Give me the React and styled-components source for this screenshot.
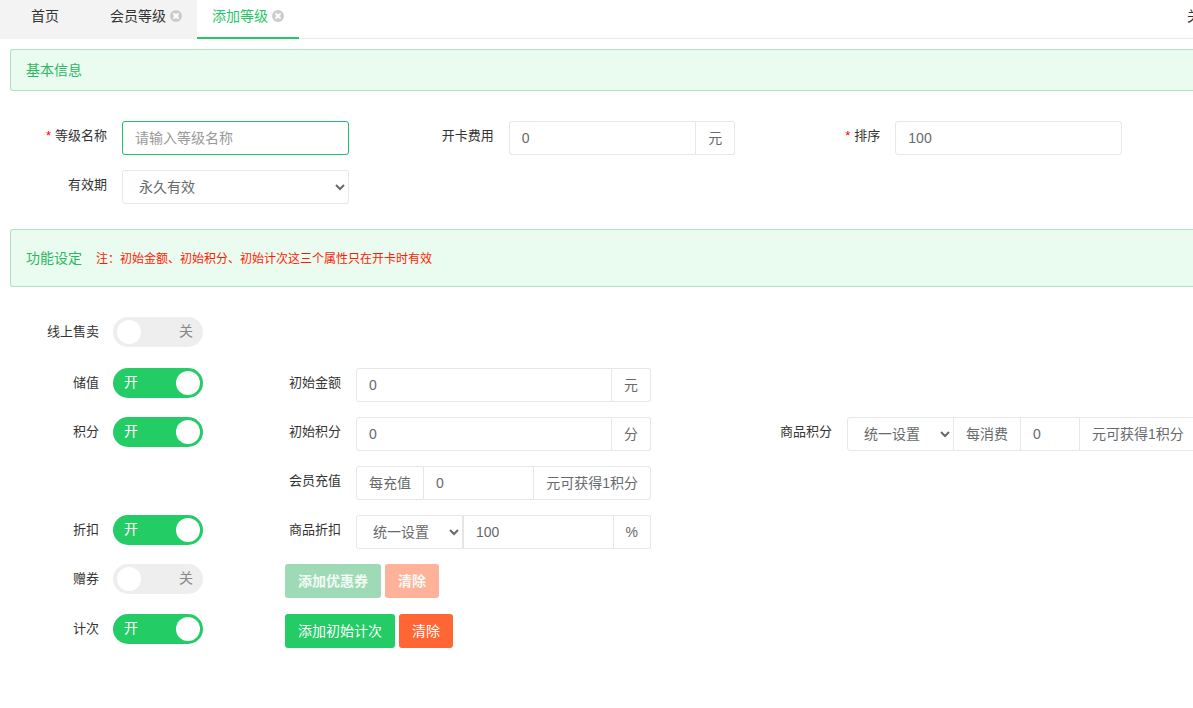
import React, { useState } from "react";
import styled, { createGlobalStyle } from "styled-components";

const GlobalStyle = createGlobalStyle`
  *, *::before, *::after {
    box-sizing: border-box;
  }

  body {
    margin: 0;
    background: #fff;
    color: #333;
    font-family: "Liberation Sans", "Noto Sans CJK SC", sans-serif;
    font-size: 14px;
    overflow-x: hidden;
  }

  input, select, button {
    font-family: inherit;
  }
`;

const TabBar = styled.nav`
  display: flex;
  height: 39px;
  border-bottom: 1px solid #ebebeb;
`;

const Tab = styled.div`
  display: flex;
  align-items: flex-start;
  gap: 4px;
  height: 39px;
  padding: ${(props) => (props.$home ? "0 36px 0 31px" : "0 15px")};
  background: ${(props) => (props.$active ? "#fff" : "#f3f3f3")};
  border-bottom: 2px solid ${(props) => (props.$active ? "#24c864" : "#f3f3f3")};
`;

const TabLink = styled.a`
  color: ${(props) => (props.$active ? "#24c864" : "#333")};
  line-height: 32px;
  text-decoration: none;
`;

const TabClose = styled.button`
  display: block;
  height: 32px;
  padding: 0;
  border: 0;
  background: none;
  cursor: pointer;

  svg {
    display: block;
  }
`;

const TabMenu = styled.button`
  width: 6px;
  height: 32px;
  margin-left: auto;
  padding: 0 0 2px;
  border: 0;
  background: none;
  color: #333;
  font-size: 14px;
  text-align: left;
  white-space: nowrap;
`;

const Page = styled.main`
  padding: 10px 0 0 10px;
`;

const Banner = styled.header`
  display: flex;
  align-items: center;
  gap: 14px;
  height: ${(props) => (props.$tall ? 58 : 42)}px;
  margin-bottom: 30px;
  padding: 0 15px 2px;
  border: 1px solid #b0e3c5;
  border-right: 0;
  border-radius: 3px 0 0 3px;
  background: #eafbf0;
`;

const BannerTitle = styled.h2`
  margin: 0;
  color: #2bb761;
  font-size: 14px;
  font-weight: 400;
`;

const BannerNote = styled.span`
  color: #ff1a00;
  font-size: 12px;
`;

const BasicGrid = styled.div`
  display: grid;
  grid-template-columns: repeat(3, 1fr);
  row-gap: 15px;
  margin-bottom: 25px;
  padding-right: 23px;
`;

const BasicField = styled.div`
  display: grid;
  grid-template-columns: 97px minmax(0, 1fr);
  column-gap: 15px;
  padding-right: 48px;
`;

const Label = styled.label`
  color: #333;
  font-size: 13px;
  line-height: 30px;
  text-align: right;
  white-space: nowrap;
`;

const Required = styled.span`
  margin-right: 4px;
  color: #f00;
`;

const Settings = styled.div`
  display: flex;
  flex-direction: column;
  gap: 15px;
`;

const SettingRow = styled.div`
  display: grid;
  grid-template-columns: minmax(0, 275fr) minmax(0, 366fr) minmax(0, 542fr);
  min-height: ${(props) => props.$height || 34}px;
`;

const SwitchField = styled.div`
  display: grid;
  grid-template-columns: 89px 90px;
  column-gap: 14px;
  align-items: start;
`;

const SettingField = styled.div`
  display: grid;
  grid-template-columns: ${(props) => (props.$wide ? 181 : 56)}px minmax(0, 1fr);
  column-gap: 15px;
  align-items: start;
`;

const Control = styled.input`
  flex: 1;
  width: 100%;
  min-width: 0;
  height: 34px;
  padding: 6px 12px;
  border: 1px solid #e5e6e7;
  border-radius: 3px;
  background: #fff;
  color: #676a6c;
  font-size: 14px;
  outline: 0;

  &::placeholder {
    color: #999;
  }

  &:focus {
    border-color: #1ac06c;
  }
`;

const Select = styled.select`
  flex: none;
  width: ${(props) => (props.$short ? "107px" : "100%")};
  height: 34px;
  padding: 6px 12px;
  border: 1px solid #e5e6e7;
  border-radius: 3px;
  background: #fff;
  color: #676a6c;
  font-size: 14px;
`;

const Addon = styled.span`
  flex: none;
  height: 34px;
  padding: 0 12px;
  border: 1px solid #e5e6e7;
  border-radius: 3px;
  color: #676a6c;
  line-height: 32px;
  white-space: nowrap;
`;

const InputGroup = styled.div`
  display: flex;

  > :not(:first-child) {
    border-top-left-radius: 0;
    border-bottom-left-radius: 0;
  }

  > :not(:last-child) {
    border-top-right-radius: 0;
    border-bottom-right-radius: 0;
  }

  > ${Addon}:not(:first-child) {
    border-left: 0;
  }

  > ${Addon} + ${Control} {
    border-left: 0;
  }
`;

const ShortControl = styled(Control)`
  flex: none;
  width: 59px;
`;

const SwitchTrack = styled.span`
  position: relative;
  display: block;
  width: 90px;
  height: 30px;
  border-radius: 15px;
  background: ${(props) => (props.$on ? "#24cc66" : "#eee")};
`;

const SwitchInput = styled.input`
  position: absolute;
  inset: 0;
  width: 100%;
  height: 100%;
  margin: 0;
  opacity: 0;
  cursor: pointer;
`;

const SwitchFace = styled.span`
  display: flex;
  flex-direction: ${(props) => (props.$on ? "row" : "row-reverse")};
  justify-content: space-between;
  height: 30px;
  padding: ${(props) => (props.$on ? "3px 3px 3px 11px" : "3px 10px 3px 4px")};
  color: ${(props) => (props.$on ? "#fff" : "#888")};
  font-size: 14px;
  line-height: 22px;
`;

const Knob = styled.span`
  width: 24px;
  height: 24px;
  border-radius: 50%;
  background: #fff;
`;

const Actions = styled.div`
  display: flex;
  align-items: flex-start;
  gap: 4px;
`;

const Button = styled.button`
  height: 34px;
  padding: 0 13px 2px;
  border: 0;
  border-radius: 3px;
  background: ${(props) => (props.$danger ? "#ff6633" : "#24cc66")};
  color: #fff;
  font-size: 14px;
  white-space: nowrap;
  cursor: pointer;

  &:disabled {
    background: ${(props) => (props.$danger ? "#ffb299" : "#9fdab7")};
    font-weight: 700;
    color: #f2faf5;
    cursor: default;
  }
`;

const CloseIcon = () => (
  <svg width="12" height="12" viewBox="0 0 12 12">
    <circle cx="6" cy="6" r="6" fill="#ccc" />
    <path d="M3.5 3.5l5 5M8.5 3.5l-5 5" stroke="#fff" strokeWidth="1.8" />
  </svg>
);

const Switch = ({ id, label, defaultOn }) => {
  const [on, setOn] = useState(Boolean(defaultOn));

  return (
    <SwitchField>
      <Label htmlFor={id}>{label}</Label>
      <SwitchTrack $on={on}>
        <SwitchFace $on={on}>
          <span>{on ? "开" : "关"}</span>
          <Knob />
        </SwitchFace>
        <SwitchInput
          id={id}
          type="checkbox"
          checked={on}
          onChange={(event) => setOn(event.target.checked)}
        />
      </SwitchTrack>
    </SwitchField>
  );
};

const App = () => (
  <>
    <GlobalStyle />
    <TabBar>
      <Tab $home>
        <TabLink href="#home">首页</TabLink>
      </Tab>
      <Tab>
        <TabLink href="#levels">会员等级</TabLink>
        <TabClose type="button"><CloseIcon /></TabClose>
      </Tab>
      <Tab $active>
        <TabLink href="#add" $active>添加等级</TabLink>
        <TabClose type="button"><CloseIcon /></TabClose>
      </Tab>
      <TabMenu type="button">关</TabMenu>
    </TabBar>

    <Page>
      <Banner>
        <BannerTitle>基本信息</BannerTitle>
      </Banner>
      <BasicGrid>
        <BasicField>
          <Label htmlFor="name"><Required>*</Required>等级名称</Label>
          <Control id="name" placeholder="请输入等级名称" autoFocus />
        </BasicField>
        <BasicField>
          <Label htmlFor="fee">开卡费用</Label>
          <InputGroup>
            <Control id="fee" defaultValue="0" />
            <Addon>元</Addon>
          </InputGroup>
        </BasicField>
        <BasicField>
          <Label htmlFor="sort"><Required>*</Required>排序</Label>
          <Control id="sort" defaultValue="100" />
        </BasicField>
        <BasicField>
          <Label htmlFor="expiry">有效期</Label>
          <Select id="expiry">
            <option>永久有效</option>
          </Select>
        </BasicField>
      </BasicGrid>

      <Banner $tall>
        <BannerTitle>功能设定</BannerTitle>
        <BannerNote>注：初始金额、初始积分、初始计次这三个属性只在开卡时有效</BannerNote>
      </Banner>
      <Settings>
        <SettingRow $height={36}>
          <Switch id="online" label="线上售卖" />
        </SettingRow>
        <SettingRow>
          <Switch id="stored" label="储值" defaultOn />
          <SettingField>
            <Label htmlFor="amount">初始金额</Label>
            <InputGroup>
              <Control id="amount" defaultValue="0" />
              <Addon>元</Addon>
            </InputGroup>
          </SettingField>
        </SettingRow>
        <SettingRow>
          <Switch id="points" label="积分" defaultOn />
          <SettingField>
            <Label htmlFor="initial-points">初始积分</Label>
            <InputGroup>
              <Control id="initial-points" defaultValue="0" />
              <Addon>分</Addon>
            </InputGroup>
          </SettingField>
          <SettingField $wide>
            <Label htmlFor="goods-points">商品积分</Label>
            <InputGroup>
              <Select id="goods-points" $short>
                <option>统一设置</option>
              </Select>
              <Addon>每消费</Addon>
              <ShortControl aria-label="每消费" defaultValue="0" />
              <Addon>元可获得1积分</Addon>
            </InputGroup>
          </SettingField>
        </SettingRow>
        <SettingRow>
          <span />
          <SettingField>
            <Label htmlFor="recharge">会员充值</Label>
            <InputGroup>
              <Addon>每充值</Addon>
              <Control id="recharge" defaultValue="0" />
              <Addon>元可获得1积分</Addon>
            </InputGroup>
          </SettingField>
        </SettingRow>
        <SettingRow>
          <Switch id="discount" label="折扣" defaultOn />
          <SettingField>
            <Label htmlFor="goods-discount">商品折扣</Label>
            <InputGroup>
              <Select id="goods-discount" $short>
                <option>统一设置</option>
              </Select>
              <Control aria-label="商品折扣" defaultValue="100" />
              <Addon>%</Addon>
            </InputGroup>
          </SettingField>
        </SettingRow>
        <SettingRow $height={35}>
          <Switch id="coupon" label="赠券" />
          <Actions>
            <Button type="button" disabled>添加优惠券</Button>
            <Button type="button" $danger disabled>清除</Button>
          </Actions>
        </SettingRow>
        <SettingRow>
          <Switch id="times" label="计次" defaultOn />
          <Actions>
            <Button type="button">添加初始计次</Button>
            <Button type="button" $danger>清除</Button>
          </Actions>
        </SettingRow>
      </Settings>
    </Page>
  </>
);

export default App;
